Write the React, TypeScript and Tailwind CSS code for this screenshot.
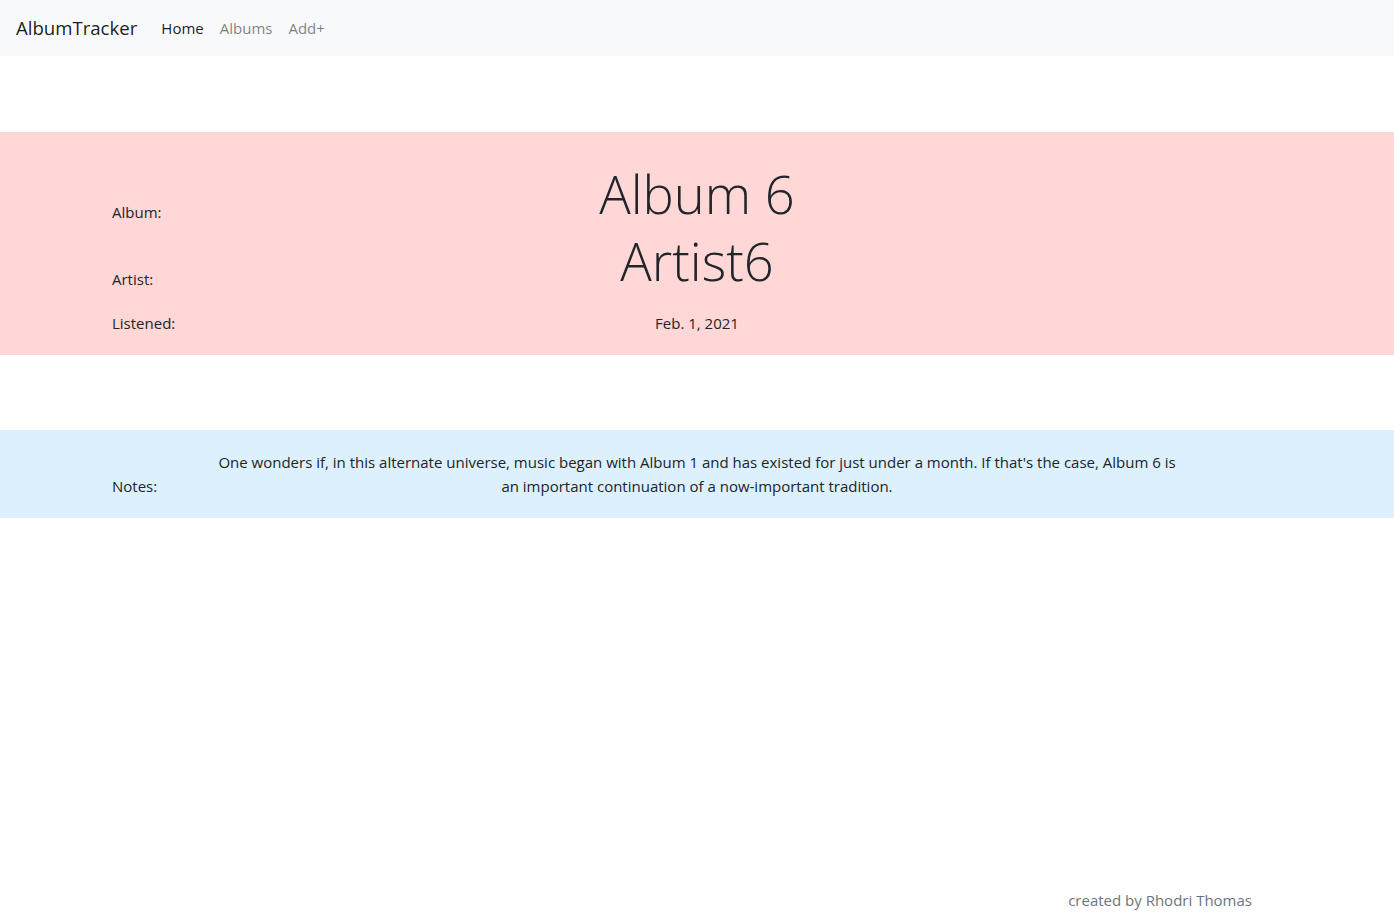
/* AlbumTracker — album detail page */

const font = "font-['Segoe_UI','Open_Sans','Noto_Sans',sans-serif]";

function Navbar() {
  return (
    <nav className="flex h-14 items-center bg-[#f8f9fa] px-4">
      <a className="mr-4 text-[18.6px] leading-[30px] text-black/90">AlbumTracker</a>
      <div className="flex items-center text-[15px]">
        <a className="px-2 text-black/90">Home</a>
        <a className="px-2 text-black/50">Albums</a>
        <a className="px-2 text-black/50">Add+</a>
      </div>
    </nav>
  );
}

/* label | value | spacer — 1 / 10 / 1 columns */
function Row({
  label,
  children,
  align = 'items-baseline',
  labelClass = '',
}: {
  label: string;
  children: React.ReactNode;
  align?: string;
  labelClass?: string;
}) {
  return (
    <div className={`flex ${align}`}>
      <div className={`w-[97.5px] shrink-0 ${labelClass}`}>{label}</div>
      <div className="w-[975px] shrink-0 text-center">{children}</div>
      <div className="w-[97.5px] shrink-0" />
    </div>
  );
}

export default function App() {
  return (
    <div className={`${font} flex min-h-screen flex-col bg-white text-[15px] leading-6 text-[#212529]`}>
      <Navbar />

      {/* album / artist / date */}
      <section className="mt-[76px] bg-[#ffd7d7] pt-[28px] pb-[20px]">
        <div className="mx-auto w-[1170px]">
          <Row label="Album:" align="items-end" labelClass="pb-[3px]">
            <span className="text-[52.5px] leading-[67px] font-light">Album 6</span>
          </Row>
          <Row label="Artist:" align="items-end" labelClass="pb-[3px]">
            <span className="text-[52.5px] leading-[67px] font-light">Artist6</span>
          </Row>
          <div className="h-[17px]" />
          <Row label="Listened:">Feb. 1, 2021</Row>
        </div>
      </section>

      {/* notes */}
      <section className="mt-[75px] bg-[#dcf0fe] py-5">
        <div className="mx-auto w-[1170px]">
          <Row label="Notes:" align="items-end">
            One wonders if, in this alternate universe, music began with Album 1 and has existed for just under a month. If
            that's the case, Album 6 is an important continuation of a now-important tradition.
          </Row>
        </div>
      </section>

      <footer className="mt-auto pb-[6px]">
        <div className="mx-auto flex w-[1170px] justify-end pr-[30px] text-[#6c757d]">created by Rhodri Thomas</div>
      </footer>
    </div>
  );
}
